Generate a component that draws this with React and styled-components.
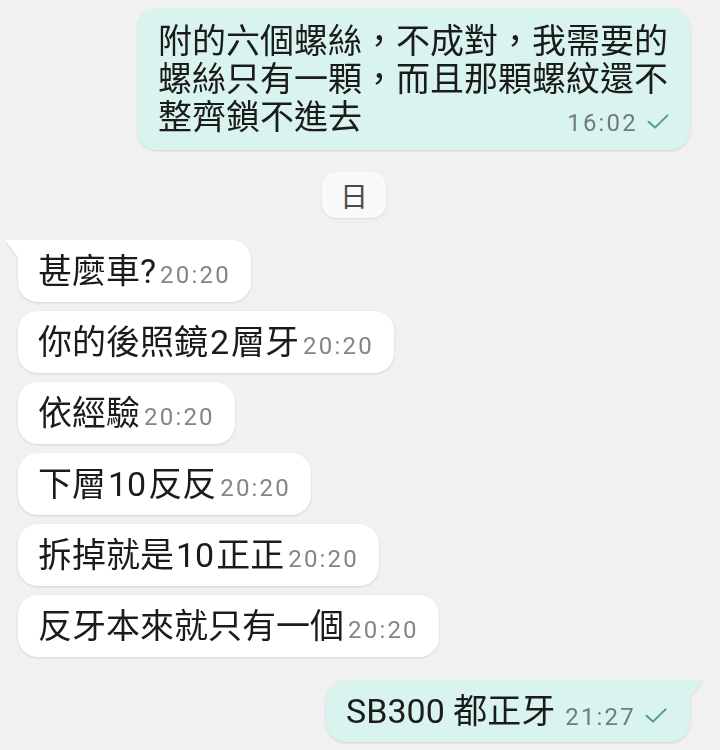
import React from 'react';
import styled, { createGlobalStyle, css } from 'styled-components';

const GlobalStyle = createGlobalStyle`
  html, body {
    margin: 0;
    padding: 0;
    background: #f1f1f1;
  }
  body {
    font-family: Roboto, "Noto Sans CJK TC", sans-serif;
  }
`;

// whole chat screen
const Screen = styled.div`
  width: 720px;
  height: 750px;
  box-sizing: border-box;
  overflow: hidden;
  background: #f1f1f1;
  display: flex;
  flex-direction: column;
  padding: 8px 30px 0 18px;
`;

const Row = styled.div`
  display: flex;
  justify-content: ${(p) => (p.$out ? 'flex-end' : 'flex-start')};
  margin-top: ${(p) => p.$gap ?? 9}px;
`;

const tailIn = css`
  border-top-left-radius: 0;
  &::before {
    content: '';
    position: absolute;
    top: 0;
    left: -13px;
    width: 14px;
    height: 19px;
    background: inherit;
    clip-path: polygon(0 0, 100% 0, 100% 100%);
  }
`;

const tailOut = css`
  border-top-right-radius: 0;
  &::before {
    content: '';
    position: absolute;
    top: 0;
    right: -13px;
    width: 14px;
    height: 19px;
    background: inherit;
    clip-path: polygon(0 0, 100% 0, 0 100%);
  }
`;

const Bubble = styled.div`
  position: relative;
  box-sizing: border-box;
  max-width: 553px;
  padding: ${(p) => p.$pad || '12px 20px'};
  background: ${(p) => (p.$out ? '#d9f4ee' : '#ffffff')};
  border-radius: 20px;
  font-size: 34px;
  line-height: 38px;
  color: #1b1b1b;
  filter: drop-shadow(0 1px 1px rgba(0, 0, 0, 0.12));
  ${(p) => p.$tail && (p.$out ? tailOut : tailIn)}
`;

// little gap the phone font puts round latin digits
const Latin = styled.span`
  margin: 0 2px;
`;

const Meta = styled.span`
  font-family: Roboto, sans-serif;
  font-size: 24px;
  line-height: 1;
  letter-spacing: 2.2px;
  color: ${(p) => (p.$out ? '#737b79' : '#858585')};
  white-space: nowrap;
  margin-left: ${(p) => p.$gap ?? 4}px;
  ${(p) =>
    p.$out &&
    css`
      float: right;
      line-height: 38px;
      position: relative;
      top: 6px;
    `}
`;

const Tick = styled.svg`
  width: 22px;
  height: 15px;
  margin-left: 9px;
  vertical-align: 2px;
`;

const DayChip = styled.div`
  align-self: center;
  margin-top: 22px;
  height: 46px;
  padding: 0 18px;
  line-height: 46px;
  background: #fafafa;
  border-radius: 14px;
  font-family: "Noto Sans CJK TC", sans-serif;
  font-size: 28px;
  color: #4a4a4a;
  box-shadow: 0 1px 2px rgba(0, 0, 0, 0.1);
`;

const Check = () => (
  <Tick viewBox="0 0 22 15">
    <path d="M1.5 7.8 L8 13.6 L20.5 1.4" fill="none" stroke="#4f9e87" strokeWidth="2" strokeLinecap="round" strokeLinejoin="round" />
  </Tick>
);

// split digit runs out so they get their side gaps
const withLatin = (text) =>
  text.split(/(\d+)/).map((part, i) =>
    /^\d+$/.test(part) ? <Latin key={i}>{part}</Latin> : part
  );

const incoming = [
  '甚麼車?',
  '你的後照鏡2層牙',
  '依經驗',
  '下層10反反',
  '拆掉就是10正正',
  '反牙本來就只有一個',
];

const App = () => {
  return (
    <Screen>
      <GlobalStyle />
      <Row $out $gap={0}>
        <Bubble $out $pad="14px 21px">
          附的六個螺絲，不成對，我需要的螺絲只有一顆，而且那顆螺紋還不整齊鎖不進去
          <Meta $out $gap={14}>
            16:02
            <Check />
          </Meta>
        </Bubble>
      </Row>

      <DayChip>日</DayChip>

      {incoming.map((text, i) => (
        <Row key={i} $gap={i === 0 ? 22 : 9}>
          <Bubble $tail={i === 0}>
            {withLatin(text)}
            <Meta>20:20</Meta>
          </Bubble>
        </Row>
      ))}

      <Row $out $gap={23}>
        <Bubble $out $tail $pad="12px 23px 12px 20px">
          SB300 都正牙
          <Meta $out $gap={10}>
            21:27
            <Check />
          </Meta>
        </Bubble>
      </Row>
    </Screen>
  );
};

export default App;
